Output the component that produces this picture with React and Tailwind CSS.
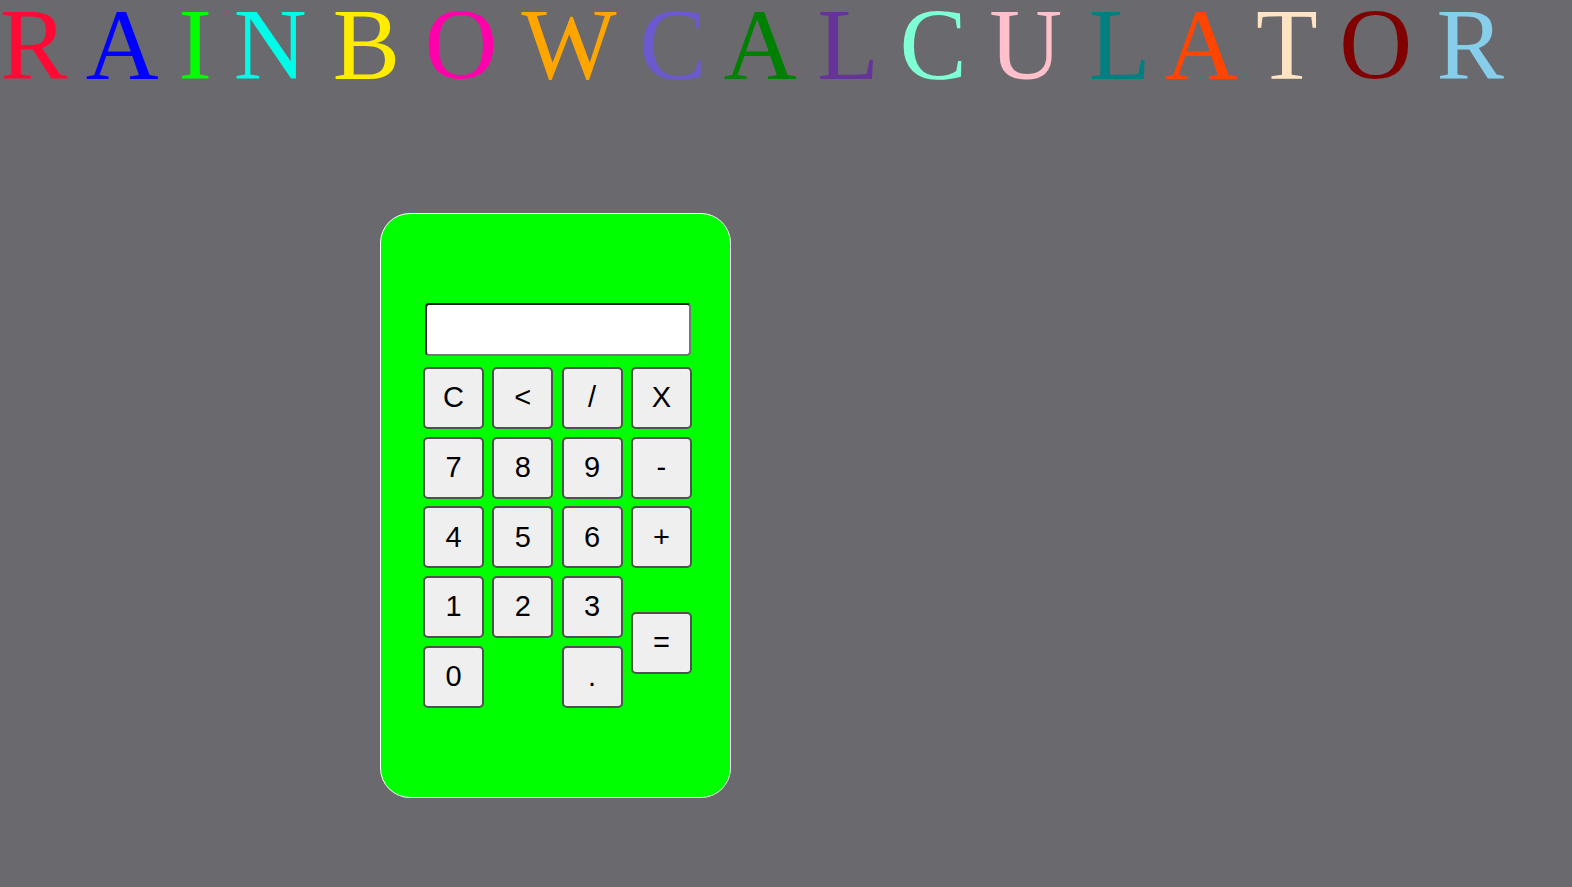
import React from "react";

const letters = [
  { ch: "R", cls: "text-[#ff0a35] mr-[18.4px]" },
  { ch: "A", cls: "text-[#0000ff] mr-[19.5px]" },
  { ch: "I", cls: "text-[#00ff00] mr-[22px]" },
  { ch: "N", cls: "text-[#00fce8] mr-[26px]" },
  { ch: "B", cls: "text-[#ffec00] mr-[24.2px]" },
  { ch: "O", cls: "text-[#ff00aa] mr-[24px]" },
  { ch: "W", cls: "text-[#ffa500] mr-[22.4px]" },
  { ch: "C", cls: "text-[#6a5acd] mr-[17.2px]" },
  { ch: "A", cls: "text-[#008000] mr-[20.7px]" },
  { ch: "L", cls: "text-[#663399] mr-[20.6px]" },
  { ch: "C", cls: "text-[#7fffd4] mr-[22.3px]" },
  { ch: "U", cls: "text-[#ffc0cb] mr-[26.7px]" },
  { ch: "L", cls: "text-[#008080] mr-[14.1px]" },
  { ch: "A", cls: "text-[#ff4500] mr-[18.4px]" },
  { ch: "T", cls: "text-[#ffe4c4] mr-[21.6px]" },
  { ch: "O", cls: "text-[#800000] mr-[24.3px]" },
  { ch: "R", cls: "text-[#87ceeb]" },
];

const btn =
  "w-[61px] h-[62px] bg-[#efefef] border-2 border-[#505050] rounded-[5px] text-black text-[29px] flex items-center justify-center font-['Arial','Liberation_Sans',sans-serif]";

function Key({ label, extra = "" }) {
  return (
    <button type="button" className={`${btn} ${extra}`}>
      {label}
    </button>
  );
}

export default function App() {
  return (
    <div className="min-h-[887px] w-full bg-[#6a696e] overflow-hidden">
      <h1 className="m-0 whitespace-nowrap font-['Times_New_Roman','Liberation_Serif',serif] text-[101px] leading-[90px] font-normal flex">
        {letters.map((l, i) => (
          <span key={i} className={l.cls}>
            {l.ch}
          </span>
        ))}
      </h1>

      <div className="mt-[123px] ml-[380px] w-[351px] h-[585px] rounded-[30px] border border-white bg-[#00ff00] pt-[89px] pl-[42px]">
        <div className="ml-[2px] w-[266px] h-[53px] bg-white rounded-[4px] border-2 border-t-[#1e1e1e] border-l-[#1e1e1e] border-b-[#767676] border-r-[#767676]" />
        <div className="mt-[11px] grid grid-cols-[repeat(4,61px)] grid-rows-[repeat(5,62px)] gap-x-[8.3px] gap-y-[7.7px]">
          <Key label="C" />
          <Key label="<" />
          <Key label="/" />
          <Key label="X" />
          <Key label="7" />
          <Key label="8" />
          <Key label="9" />
          <Key label="-" />
          <Key label="4" />
          <Key label="5" />
          <Key label="6" />
          <Key label="+" />
          <Key label="1" />
          <Key label="2" />
          <Key label="3" />
          <Key label="=" extra="row-span-2 self-center mt-[2px]" />
          <Key label="0" extra="col-start-1" />
          <Key label="." extra="col-start-3" />
        </div>
      </div>
    </div>
  );
}
